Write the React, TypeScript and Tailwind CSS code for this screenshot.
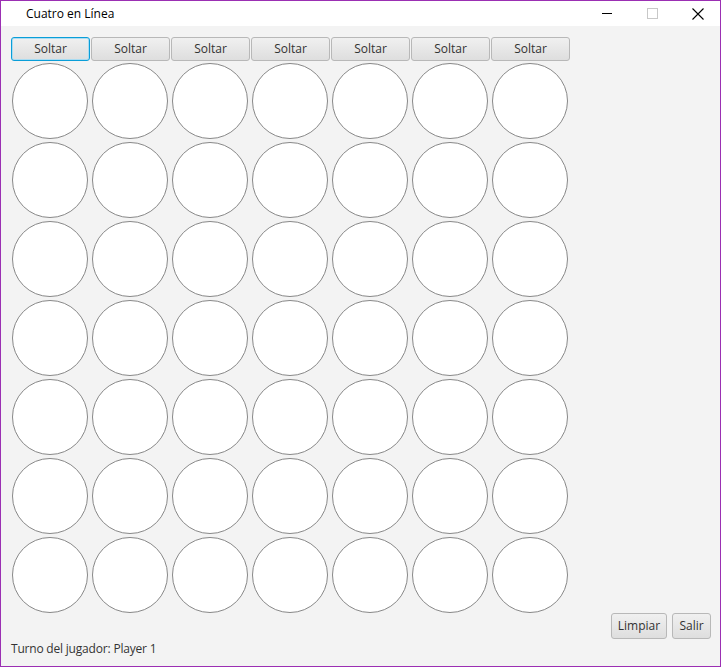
import React from "react";

const cols = [0, 1, 2, 3, 4, 5, 6];
const rows = [0, 1, 2, 3, 4, 5, 6];

export default function App() {
  return (
    <div
      className="w-[721px] h-[667px] border border-[#9b2fb3] flex flex-col bg-[#f3f3f3] overflow-hidden text-[#333]"
      style={{ fontFamily: '"Open Sans", "Noto Sans", sans-serif' }}
    >
      {/* Title bar */}
      <div className="h-[25px] bg-white flex items-center relative shrink-0">
        <span className="ml-[25px] text-[12px] text-black leading-none">Cuatro en Línea</span>
        <div className="absolute left-[601px] top-[12px] w-[10px] h-px bg-black" />
        <div className="absolute left-[646px] top-[7px] w-[11px] h-[11px] border border-[#c8c8c8]" />
        <svg className="absolute left-[691px] top-[7px]" width="12" height="12" viewBox="0 0 12 12">
          <path d="M0.5 0.5 L11.5 11.5 M11.5 0.5 L0.5 11.5" stroke="#000" strokeWidth="1.1" />
        </svg>
      </div>

      {/* Content */}
      <div className="flex flex-col flex-1 pl-[10px] pr-[9px] pt-[11px]">
        <div className="flex gap-px">
          {cols.map((c) => (
            <button
              key={c}
              className={
                "w-[79px] h-[24px] rounded-[3px] text-[12px] leading-none bg-gradient-to-b from-[#f0f0f0] to-[#dedede] text-[#333] " +
                (c === 0
                  ? "border border-[#0a9ed8] shadow-[inset_0_0_0_1px_#aadcf2]"
                  : "border border-[#b8b8b8]")
              }
            >
              Soltar
            </button>
          ))}
        </div>
        <div className="flex flex-col gap-[3px] mt-[2px] pl-[1px]">
          {rows.map((r) => (
            <div key={r} className="flex gap-[4px]">
              {cols.map((c) => (
                <div
                  key={c}
                  className="w-[76px] h-[76px] rounded-full bg-white border border-[#888888]"
                />
              ))}
            </div>
          ))}
        </div>
        <div className="flex justify-end gap-[5px] mt-0">
          <button className="w-[56px] h-[26px] rounded-[3px] text-[12px] leading-none bg-gradient-to-b from-[#f0f0f0] to-[#dedede] border border-[#b8b8b8] text-[#333]">
            Limpiar
          </button>
          <button className="w-[39px] h-[26px] rounded-[3px] text-[12px] leading-none bg-gradient-to-b from-[#f0f0f0] to-[#dedede] border border-[#b8b8b8] text-[#333]">
            Salir
          </button>
        </div>
        <div className="mt-[2px] text-[12px] leading-[16px] flex gap-[3px] tracking-[-0.2px]">
          <span>Turno del jugador:</span>
          <span>Player 1</span>
        </div>
      </div>
    </div>
  );
}
